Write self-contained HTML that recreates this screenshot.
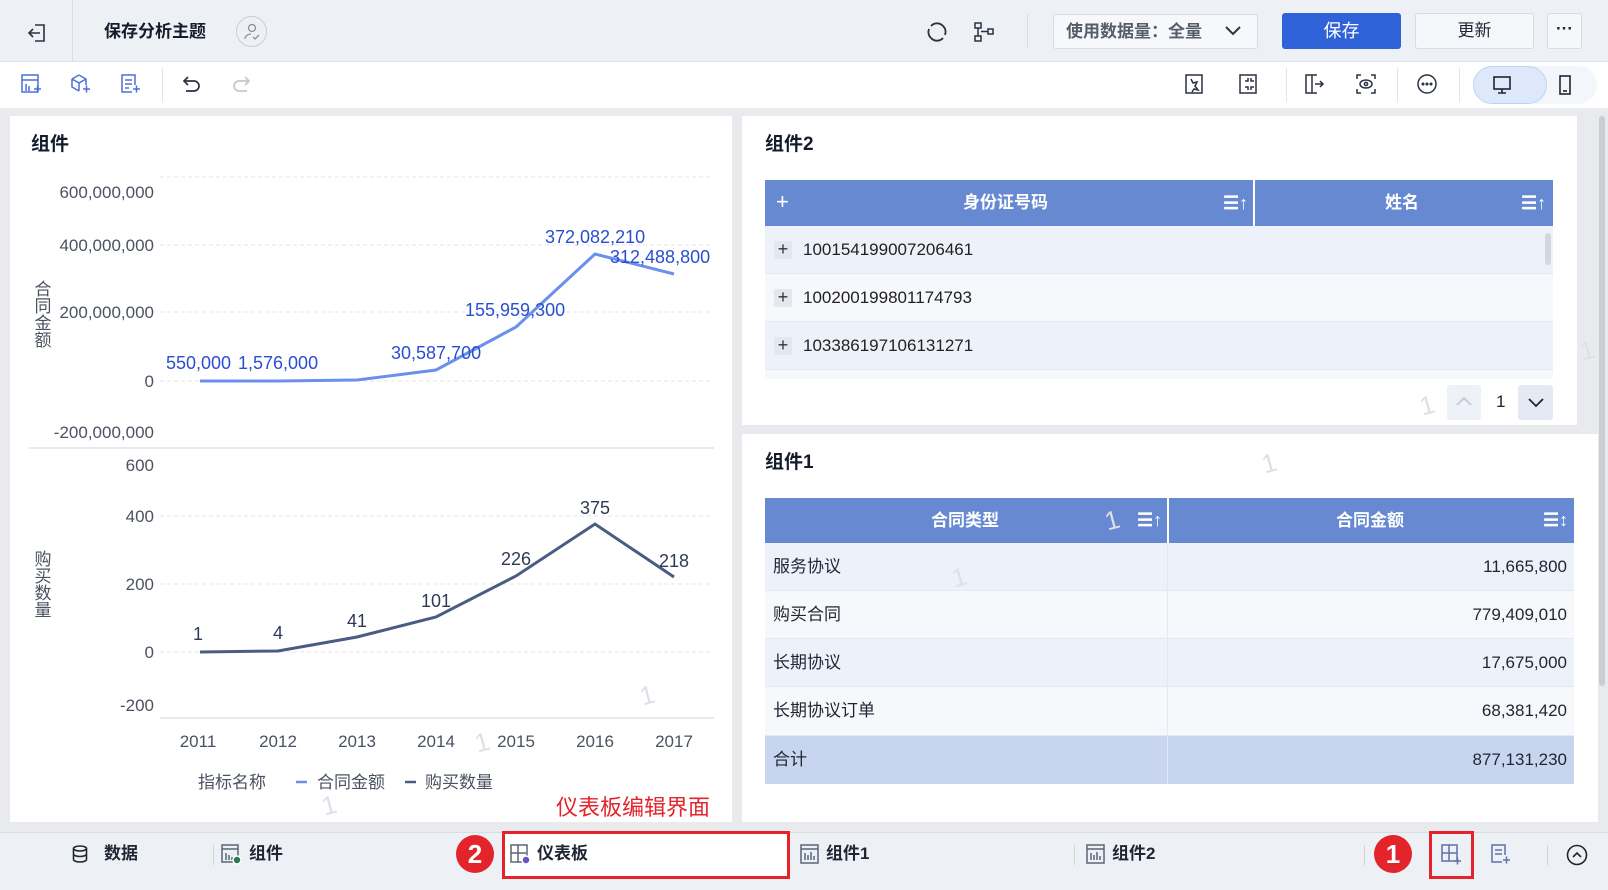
<!DOCTYPE html>
<html><head><meta charset="utf-8"><style>
*{margin:0;padding:0;box-sizing:border-box}
body{width:1608px;height:890px;overflow:hidden;background:#e8eaee;font-family:"Liberation Sans","Noto Sans CJK SC",sans-serif;color:#1f2533;position:relative}
.a{position:absolute}
.top{left:0;top:0;width:1608px;height:62px;background:#edf0f5;border-bottom:1px solid #dfe3ea}
.tb{left:0;top:62px;width:1608px;height:46px;background:#fff}
.panel{background:#fff}
.title{font-size:19px;font-weight:bold;color:#141c2c}
.btn{border:1px solid #d7dbe3;border-radius:3px;background:#f5f7fa;font-size:17px;text-align:center}
.bar{left:0;top:832px;width:1608px;height:58px;background:#edf0f5;border-top:1px solid #d8dce3}
.bi{font-size:17px;font-weight:bold;color:#1f2533;line-height:22px}
.dv{width:1px;height:20px;background:#cfd4dc}
.wm{color:#dde0e6;font-size:26px;transform:rotate(-15deg)}
.rc{width:38px;height:38px;border-radius:50%;background:#e3242b;color:#fff;font-size:26px;font-weight:bold;text-align:center;line-height:38px}
.hl{color:#fff;font-weight:bold;font-size:17px;height:46px;line-height:46px}
.cl{font-size:17px;height:48px;line-height:48px}
</style></head><body>

<div class="a top"></div>
<svg class="a" style="left:26px;top:22px" width="22" height="22" viewBox="0 0 22 22" fill="none" stroke="#2a3140" stroke-width="1.6"><path d="M9 3h9v16H9"/><path d="M14 11H3M7 7l-4 4 4 4"/></svg>
<div class="a" style="left:72px;top:0;width:1px;height:62px;background:#d8dce3"></div>
<div class="a title" style="left:104px;top:20px;font-size:17px;line-height:24px">保存分析主题</div>
<div class="a" style="left:236px;top:16px;width:31px;height:31px;border:1px solid #c9ced6;border-radius:50%"></div>
<svg class="a" style="left:242px;top:22px" width="20" height="20" viewBox="0 0 20 20" fill="none" stroke="#8a919c" stroke-width="1.3"><circle cx="10" cy="6" r="3.5"/><path d="M3 17c0-3 3-5 6-5M11 15l2 2 4-4"/></svg>
<svg class="a" style="left:925px;top:20px" width="24" height="24" viewBox="0 0 24 24" fill="none" stroke="#2a3140" stroke-width="1.8"><path d="M6 6a8 8 0 0 1 12 0M18 18a8 8 0 0 1-12 0M4 9a8 8 0 0 0 2 9M20 15a8 8 0 0 0-2-9"/></svg>
<svg class="a" style="left:972px;top:20px" width="24" height="24" viewBox="0 0 24 24" fill="none" stroke="#2a3140" stroke-width="1.5"><rect x="3" y="3" width="6" height="5"/><rect x="3" y="16" width="6" height="5"/><rect x="16" y="9" width="5" height="5"/><path d="M6 8v8M9 11.5h7"/></svg>
<div class="a" style="left:1027px;top:14px;width:1px;height:34px;background:#d8dce3"></div>
<div class="a" style="left:1053px;top:14px;width:205px;height:35px;background:#f7f8fb;border:1px solid #d7dbe3;border-radius:3px;font-size:17px;font-weight:bold;color:#555d69;line-height:33px;padding-left:12px">使用数据量：全量</div>
<svg class="a" style="left:1224px;top:24px" width="18" height="14" viewBox="0 0 18 14" fill="none" stroke="#333" stroke-width="2"><path d="M2 3l7 7 7-7"/></svg>
<div class="a" style="left:1282px;top:13px;width:119px;height:36px;background:#2f62d9;border-radius:3px;color:#fff;font-size:18px;text-align:center;line-height:36px">保存</div>
<div class="a btn" style="left:1415px;top:13px;width:119px;height:36px;line-height:34px">更新</div>
<div class="a btn" style="left:1547px;top:13px;width:35px;height:36px;line-height:30px;font-weight:bold">···</div>

<div class="a tb"></div>
<svg class="a" style="left:20px;top:73px" width="22" height="22" viewBox="0 0 22 22" fill="none" stroke="#4d6fd8" stroke-width="1.5"><rect x="2" y="2" width="16" height="17"/><path d="M2 7h16M6 11v7M9 13v5M14 16h7M17.5 12.5v7"/></svg>
<svg class="a" style="left:69px;top:73px" width="22" height="22" viewBox="0 0 22 22" fill="none" stroke="#4d6fd8" stroke-width="1.5"><path d="M10 2l7 4v6M3 6l7-4M3 6v8l7 4M3 6l7 4 7-4M10 10v8M14 16h7M17.5 12.5v7"/></svg>
<svg class="a" style="left:119px;top:73px" width="22" height="22" viewBox="0 0 22 22" fill="none" stroke="#4d6fd8" stroke-width="1.5"><path d="M13 19H3V2h13v10M6 7h7M6 11h7M6 15h4M14 16h7M17.5 12.5v7"/></svg>
<div class="a" style="left:162px;top:68px;width:1px;height:34px;background:#e1e4ea"></div>
<svg class="a" style="left:181px;top:73px" width="22" height="22" viewBox="0 0 22 22" fill="none" stroke="#2a3140" stroke-width="1.7"><path d="M7 4L3 8l4 4M3 8h10a5 5 0 0 1 0 10H5"/></svg>
<svg class="a" style="left:230px;top:73px" width="22" height="22" viewBox="0 0 22 22" fill="none" stroke="#c3c8d0" stroke-width="1.7"><path d="M15 4l4 4-4 4M19 8H9a5 5 0 0 0 0 10h8"/></svg>
<svg class="a" style="left:1183px;top:73px" width="22" height="22" viewBox="0 0 22 22" fill="none" stroke="#2a3140" stroke-width="1.5"><path d="M3 2h16v18H3zM8 6l2 4 4-1-2 4 3 4-4-1-2 3"/></svg>
<svg class="a" style="left:1237px;top:73px" width="22" height="22" viewBox="0 0 22 22" fill="none" stroke="#2a3140" stroke-width="1.5"><rect x="3" y="2" width="16" height="18"/><path d="M8 8h3V5M14 5v3h3M8 14h3v3M14 17v-3h3"/></svg>
<div class="a" style="left:1286px;top:68px;width:1px;height:34px;background:#e1e4ea"></div>
<svg class="a" style="left:1303px;top:73px" width="22" height="22" viewBox="0 0 22 22" fill="none" stroke="#2a3140" stroke-width="1.5"><path d="M3 2h6v18H3zM9 2h5M9 20h5M12 11h8M17 8l3 3-3 3"/></svg>
<svg class="a" style="left:1355px;top:73px" width="22" height="22" viewBox="0 0 22 22" fill="none" stroke="#2a3140" stroke-width="1.5"><path d="M2 6V2h4M16 2h4v4M20 16v4h-4M6 20H2v-4"/><ellipse cx="11" cy="11" rx="6" ry="4"/><circle cx="11" cy="11" r="1.6"/></svg>
<div class="a" style="left:1397px;top:68px;width:1px;height:34px;background:#e1e4ea"></div>
<svg class="a" style="left:1416px;top:73px" width="22" height="22" viewBox="0 0 22 22" fill="none" stroke="#2a3140" stroke-width="1.5"><circle cx="11" cy="11" r="9"/><circle cx="7" cy="11" r=".8"/><circle cx="11" cy="11" r=".8"/><circle cx="15" cy="11" r=".8"/></svg>
<div class="a" style="left:1459px;top:68px;width:1px;height:34px;background:#e1e4ea"></div>
<div class="a" style="left:1473px;top:66px;width:124px;height:38px;background:#f3f6fb;border-radius:19px"></div>
<div class="a" style="left:1473px;top:66px;width:74px;height:38px;background:#dde9fb;border:1px solid #bcd3f7;border-radius:19px"></div>
<svg class="a" style="left:1491px;top:74px" width="22" height="22" viewBox="0 0 22 22" fill="none" stroke="#1f2533" stroke-width="1.6"><rect x="3" y="3" width="16" height="12"/><path d="M11 15v4M7 19h8"/></svg>
<svg class="a" style="left:1554px;top:74px" width="22" height="22" viewBox="0 0 22 22" fill="none" stroke="#1f2533" stroke-width="1.6"><rect x="6" y="2" width="10" height="18"/><path d="M9 17h4"/></svg>

<!-- left panel -->
<div class="a panel" style="left:10px;top:116px;width:722px;height:706px"></div>
<div class="a title" style="left:31px;top:133px;line-height:24px">组件</div>
<svg class="a" style="left:0;top:0" width="740" height="830" font-family="Liberation Sans, Noto Sans CJK SC, sans-serif">
 <g stroke="#e2e5ea" stroke-dasharray="4 3" stroke-width="1">
  <line x1="160" y1="177" x2="712" y2="177"/><line x1="160" y1="245" x2="712" y2="245"/><line x1="160" y1="312" x2="712" y2="312"/><line x1="160" y1="381" x2="712" y2="381"/>
  <line x1="160" y1="516" x2="712" y2="516"/><line x1="160" y1="584" x2="712" y2="584"/><line x1="160" y1="652" x2="712" y2="652"/>
 </g>
 <line x1="29" y1="448" x2="714" y2="448" stroke="#cfd3d9"/>
 <line x1="160" y1="718" x2="714" y2="718" stroke="#cfd3d9"/>
 <g font-size="17" fill="#4b5260" text-anchor="end">
  <text x="154" y="198">600,000,000</text><text x="154" y="251">400,000,000</text><text x="154" y="318">200,000,000</text><text x="154" y="387">0</text><text x="154" y="438">-200,000,000</text>
  <text x="154" y="471">600</text><text x="154" y="522">400</text><text x="154" y="590">200</text><text x="154" y="658">0</text><text x="154" y="711">-200</text>
 </g>
 <g font-size="17" fill="#4b5260" writing-mode="tb">
  <text x="41" y="280" font-size="17">合同金额</text>
  <text x="41" y="550" font-size="17">购买数量</text>
 </g>
 <polyline fill="none" stroke="#6b8fec" stroke-width="3" points="200,381 278,381 357,380 436,370 516,327 595,254 674,274"/>
 <g font-size="18" fill="#2a4ed3">
  <text x="166" y="369">550,000</text><text x="238" y="369">1,576,000</text><text x="391" y="359">30,587,700</text><text x="465" y="316">155,959,300</text><text x="545" y="243">372,082,210</text><text x="610" y="263">312,488,800</text>
 </g>
 <polyline fill="none" stroke="#4a5c82" stroke-width="3" points="200,652 278,651 357,637 436,617 516,576 595,524 674,577"/>
 <g font-size="18" fill="#2e3a55" text-anchor="middle">
  <text x="198" y="640">1</text><text x="278" y="639">4</text><text x="357" y="627">41</text><text x="436" y="607">101</text><text x="516" y="565">226</text><text x="595" y="514">375</text><text x="674" y="567">218</text>
 </g>
 <g font-size="17" fill="#4b5260" text-anchor="middle">
  <text x="198" y="747">2011</text><text x="278" y="747">2012</text><text x="357" y="747">2013</text><text x="436" y="747">2014</text><text x="516" y="747">2015</text><text x="595" y="747">2016</text><text x="674" y="747">2017</text>
 </g>
 <g font-size="17" fill="#4b5260">
  <text x="198" y="788">指标名称</text>
  <line x1="296" y1="782" x2="307" y2="782" stroke="#6b8fec" stroke-width="2.5"/><text x="317" y="788">合同金额</text>
  <line x1="405" y1="782" x2="416" y2="782" stroke="#4a5c82" stroke-width="2.5"/><text x="425" y="788">购买数量</text>
 </g>
 <text x="556" y="815" font-size="22" fill="#e3242b">仪表板编辑界面</text>
</svg>
<div class="a wm" style="left:640px;top:680px">1</div>
<div class="a wm" style="left:475px;top:727px">1</div>
<div class="a wm" style="left:322px;top:790px">1</div>

<!-- right top panel -->
<div class="a panel" style="left:742px;top:116px;width:835px;height:309px"></div>
<div class="a title" style="left:765px;top:133px;line-height:24px">组件2</div>
<div class="a" style="left:765px;top:180px;width:788px;height:46px;background:#6689d1"></div>
<div class="a" style="left:1253px;top:180px;width:2px;height:46px;background:#fff"></div>
<div class="a hl" style="left:776px;top:179px;font-size:22px;font-weight:normal">+</div>
<div class="a hl" style="left:963px;top:180px">身份证号码</div>
<div class="a hl" style="left:1385px;top:180px">姓名</div>
<div class="a hl" style="left:1223px;top:180px;font-size:18px">☰↑</div>
<div class="a hl" style="left:1521px;top:180px;font-size:18px">☰↑</div>
<div class="a" style="left:765px;top:226px;width:788px;height:48px;background:#edf1f9;border-bottom:1px solid #e3e8f2"></div>
<div class="a" style="left:765px;top:274px;width:788px;height:48px;background:#f6f8fc;border-bottom:1px solid #e3e8f2"></div>
<div class="a" style="left:765px;top:322px;width:788px;height:48px;background:#edf1f9;border-bottom:1px solid #e3e8f2"></div>
<div class="a" style="left:765px;top:370px;width:788px;height:9px;background:#f6f8fc"></div>
<div class="a" style="left:1545px;top:233px;width:6px;height:32px;background:#d3d8e0;border-radius:3px"></div>
<div class="a" style="left:774px;top:241px;width:18px;height:18px;background:#e3e7ee;font-size:18px;line-height:17px;text-align:center;color:#333">+</div>
<div class="a" style="left:774px;top:289px;width:18px;height:18px;background:#e3e7ee;font-size:18px;line-height:17px;text-align:center;color:#333">+</div>
<div class="a" style="left:774px;top:337px;width:18px;height:18px;background:#e3e7ee;font-size:18px;line-height:17px;text-align:center;color:#333">+</div>
<div class="a cl" style="left:803px;top:226px;color:#222">100154199007206461</div>
<div class="a cl" style="left:803px;top:274px;color:#222">100200199801174793</div>
<div class="a cl" style="left:803px;top:322px;color:#222">103386197106131271</div>
<div class="a" style="left:1447px;top:385px;width:34px;height:35px;background:#eef1f7;border-radius:3px"></div>
<svg class="a" style="left:1455px;top:394px" width="18" height="14" viewBox="0 0 18 14" fill="none" stroke="#c3c8d0" stroke-width="1.8"><path d="M2 11l7-7 7 7"/></svg>
<div class="a" style="left:1496px;top:392px;font-size:17px;color:#222">1</div>
<div class="a" style="left:1518px;top:385px;width:35px;height:35px;background:#e4e9f3;border-radius:3px"></div>
<svg class="a" style="left:1527px;top:396px" width="18" height="14" viewBox="0 0 18 14" fill="none" stroke="#1f2533" stroke-width="1.8"><path d="M2 3l7 7 7-7"/></svg>
<div class="a wm" style="left:1420px;top:390px">1</div>
<div class="a wm" style="left:1580px;top:335px">1</div>

<!-- right bottom panel -->
<div class="a panel" style="left:742px;top:434px;width:856px;height:388px"></div>
<div class="a title" style="left:765px;top:451px;line-height:24px">组件1</div>
<div class="a" style="left:765px;top:498px;width:809px;height:45px;background:#6689d1"></div>
<div class="a" style="left:1167px;top:498px;width:2px;height:45px;background:#fff"></div>
<div class="a hl" style="left:931px;top:498px">合同类型</div>
<div class="a hl" style="left:1336px;top:498px">合同金额</div>
<div class="a hl" style="left:1137px;top:497px;font-size:18px">☰↑</div>
<div class="a hl" style="left:1543px;top:497px;font-size:18px">☰↕</div>
<div class="a" style="left:765px;top:543px;width:809px;height:48px;background:#edf1f9;border-bottom:1px solid #e3e8f2"></div>
<div class="a" style="left:765px;top:591px;width:809px;height:48px;background:#f6f8fc;border-bottom:1px solid #e3e8f2"></div>
<div class="a" style="left:765px;top:639px;width:809px;height:48px;background:#edf1f9;border-bottom:1px solid #e3e8f2"></div>
<div class="a" style="left:765px;top:687px;width:809px;height:49px;background:#f6f8fc;border-bottom:1px solid #e3e8f2"></div>
<div class="a" style="left:765px;top:736px;width:809px;height:48px;background:#c8d5ef"></div>
<div class="a" style="left:1167px;top:543px;width:1px;height:241px;background:#e3e8f2"></div>
<div class="a cl" style="left:773px;top:543px">服务协议</div>
<div class="a cl" style="left:773px;top:591px">购买合同</div>
<div class="a cl" style="left:773px;top:639px">长期协议</div>
<div class="a cl" style="left:773px;top:687px">长期协议订单</div>
<div class="a cl" style="left:773px;top:736px">合计</div>
<div class="a cl" style="left:1380px;top:543px;width:187px;text-align:right">11,665,800</div>
<div class="a cl" style="left:1380px;top:591px;width:187px;text-align:right">779,409,010</div>
<div class="a cl" style="left:1380px;top:639px;width:187px;text-align:right">17,675,000</div>
<div class="a cl" style="left:1380px;top:687px;width:187px;text-align:right">68,381,420</div>
<div class="a cl" style="left:1380px;top:736px;width:187px;text-align:right">877,131,230</div>
<div class="a wm" style="left:1262px;top:448px">1</div>
<div class="a wm" style="left:952px;top:562px">1</div>
<div class="a wm" style="left:1105px;top:505px">1</div>
<div class="a" style="left:1599px;top:116px;width:6px;height:570px;background:#c9cdd4;border-radius:3px"></div>

<!-- bottom bar -->
<div class="a bar"></div>
<svg class="a" style="left:70px;top:844px" width="20" height="20" viewBox="0 0 20 20" fill="none" stroke="#1f2533" stroke-width="1.6"><ellipse cx="10" cy="4.5" rx="6.5" ry="2.5"/><path d="M3.5 4.5v11c0 1.4 2.9 2.5 6.5 2.5s6.5-1.1 6.5-2.5v-11M3.5 10c0 1.4 2.9 2.5 6.5 2.5s6.5-1.1 6.5-2.5"/></svg>
<div class="a bi" style="left:104px;top:843px">数据</div>
<div class="a dv" style="left:213px;top:845px"></div>
<svg class="a" style="left:220px;top:843px" width="22" height="22" viewBox="0 0 22 22" fill="none" stroke="#5a6677" stroke-width="1.5"><rect x="2" y="2" width="16" height="17"/><path d="M2 6h16M6 10v7M9 12v5M12 14v3"/><circle cx="17" cy="17" r="4" fill="#2b7a55" stroke="#fff"/></svg>
<div class="a bi" style="left:249px;top:843px">组件</div>
<div class="a rc" style="left:456px;top:835px">2</div>
<div class="a" style="left:502px;top:831px;width:288px;height:48px;background:#fff;border:3px solid #e3242b"></div>
<svg class="a" style="left:509px;top:843px" width="22" height="22" viewBox="0 0 22 22" fill="none" stroke="#5a6677" stroke-width="1.5"><rect x="2" y="2" width="16" height="17"/><path d="M2 10h15M9 2v17"/><circle cx="17" cy="17" r="4" fill="#6b4fc9" stroke="#fff"/></svg>
<div class="a bi" style="left:537px;top:843px">仪表板</div>
<svg class="a" style="left:799px;top:843px" width="22" height="22" viewBox="0 0 22 22" fill="none" stroke="#5a6677" stroke-width="1.5"><rect x="2" y="2" width="17" height="18"/><path d="M2 6h17M6 10v7M9 12v5M12 9v8M15 13v4"/></svg>
<div class="a bi" style="left:826px;top:843px">组件1</div>
<div class="a dv" style="left:1074px;top:845px"></div>
<svg class="a" style="left:1085px;top:843px" width="22" height="22" viewBox="0 0 22 22" fill="none" stroke="#5a6677" stroke-width="1.5"><rect x="2" y="2" width="17" height="18"/><path d="M2 6h17M6 10v7M9 12v5M12 9v8M15 13v4"/></svg>
<div class="a bi" style="left:1112px;top:843px">组件2</div>
<div class="a dv" style="left:1364px;top:845px"></div>
<div class="a rc" style="left:1374px;top:835px">1</div>
<div class="a" style="left:1429px;top:831px;width:45px;height:48px;border:3px solid #e3242b"></div>
<svg class="a" style="left:1440px;top:843px" width="22" height="22" viewBox="0 0 22 22" fill="none" stroke="#6070a8" stroke-width="1.5"><rect x="2" y="2" width="15" height="16"/><path d="M2 10h15M9 2v16M14 18h7M17.5 14.5v7"/></svg>
<svg class="a" style="left:1489px;top:843px" width="22" height="22" viewBox="0 0 22 22" fill="none" stroke="#6070a8" stroke-width="1.5"><path d="M13 19H3V2h13v10M6 7h7M6 11h7M14 17h7M17.5 13.5v7"/></svg>
<div class="a dv" style="left:1547px;top:845px"></div>
<svg class="a" style="left:1566px;top:844px" width="22" height="22" viewBox="0 0 22 22" fill="none" stroke="#1f2533" stroke-width="1.6"><circle cx="11" cy="11" r="9.5"/><path d="M7 13l4-4 4 4"/></svg>
</body></html>
